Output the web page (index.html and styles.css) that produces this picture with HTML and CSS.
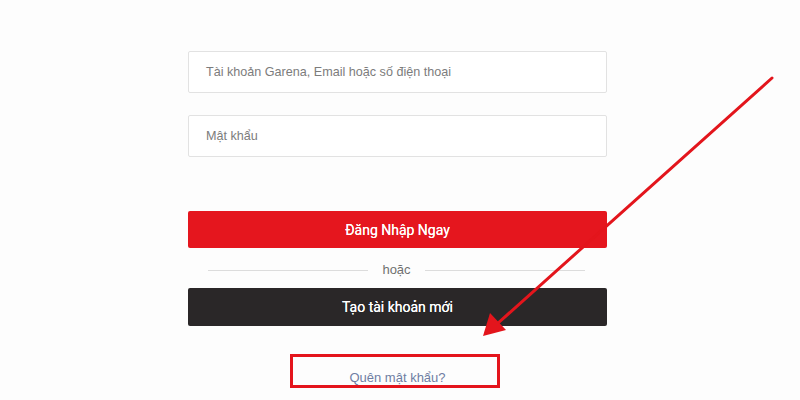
FILE: index.html
```html
<!DOCTYPE html>
<html lang="vi">
<head>
<meta charset="utf-8">
<link rel="stylesheet" href="styles.css">
</head>
<body>
<div class="page">
  <form class="form">
    <div class="field">Tài khoản Garena, Email hoặc số điện thoại</div>
    <div class="field">Mật khẩu</div>
    <div class="btn btn-red">Đăng Nhập Ngay</div>
    <div class="divider"><span class="line"></span><span class="or">hoặc</span><span class="line"></span></div>
    <div class="btn btn-dark">Tạo tài khoản mới</div>
    <div class="forgot">Quên mật khẩu?</div>
  </form>
  <div class="highlight"></div>
  <svg class="arrow" width="800" height="400" viewBox="0 0 800 400">
    <line x1="772" y1="78" x2="497" y2="324" stroke="#e3151c" stroke-width="3" stroke-linecap="round"/>
    <polygon points="483,336 490,313 506,330" fill="#e3151c"/>
  </svg>
</div>
</body>
</html>
```
FILE: styles.css
```css
html, body {
  margin: 0;
  padding: 0;
  background: #fdfdfd;
}
.page {
  position: relative;
  width: 800px;
  height: 400px;
  overflow: hidden;
  font-family: "Liberation Sans", Arial, sans-serif;
}
.form {
  margin: 0 0 0 188px;
  padding-top: 51px;
  width: 419px;
  display: flex;
  flex-direction: column;
}
.field {
  box-sizing: border-box;
  height: 42px;
  border: 1px solid #e2e2e2;
  border-radius: 2px;
  background: #fff;
  padding-left: 17px;
  display: flex;
  align-items: center;
  font-size: 12.6px;
  color: #7c7c7c;
  margin-bottom: 22px;
}
.field + .field {
  margin-bottom: 54px;
}
.btn {
  height: 37px;
  border-radius: 2px;
  display: flex;
  align-items: center;
  justify-content: center;
  color: #fff;
  font-family: Roboto, "Liberation Sans", sans-serif;
  font-weight: 400;
  font-size: 14px;
  text-shadow: 0 0 0.4px #fff;
}
.btn-red {
  background: #e5161e;
}
.btn-dark {
  background: #2a2728;
  height: 38px;
}
.divider {
  box-sizing: border-box;
  height: 40px;
  display: flex;
  align-items: center;
  padding: 4px 22px 0 20px;
  gap: 14px;
}
.line {
  flex: 1;
  height: 1px;
  background: #dcdcdc;
}
.or {
  font-size: 13px;
  color: #707070;
  padding-bottom: 2px;
}
.forgot {
  margin-top: 44px;
  text-align: center;
  font-size: 13px;
  color: #6f7ea3;
}
.highlight {
  position: absolute;
  left: 290px;
  top: 354px;
  width: 204px;
  height: 28px;
  border: 3px solid #e4141c;
}
.arrow {
  position: absolute;
  left: 0;
  top: 0;
}
```
